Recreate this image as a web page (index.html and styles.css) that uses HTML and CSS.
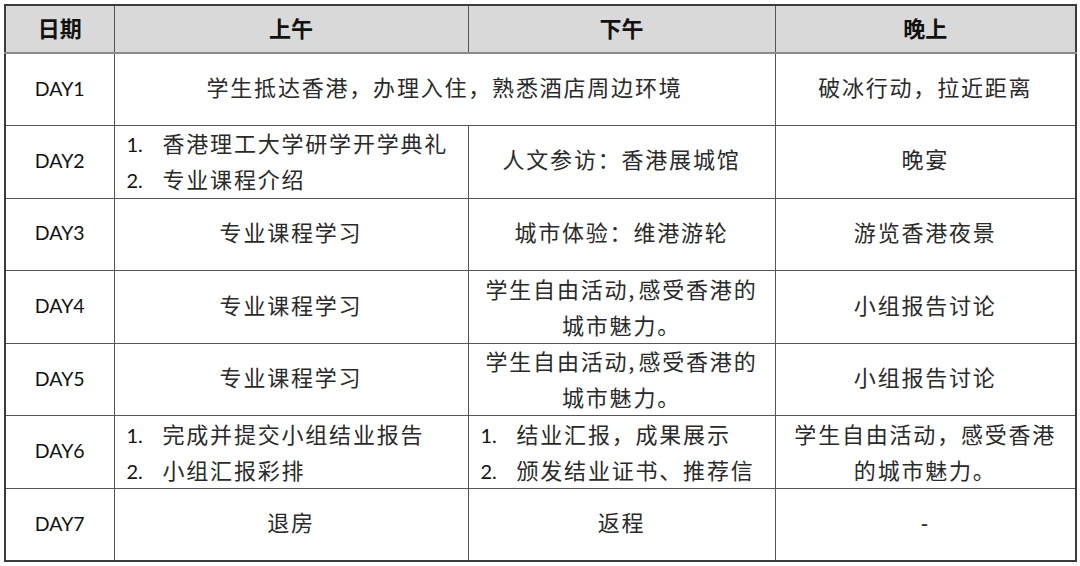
FILE: index.html
```html
<!DOCTYPE html>
<html lang="zh-CN">
<head>
<meta charset="utf-8">
<link rel="stylesheet" href="styles.css">
</head>
<body>
<table class="schedule">
  <colgroup>
    <col class="c-day">
    <col class="c-am">
    <col class="c-pm">
    <col class="c-eve">
  </colgroup>
  <thead>
    <tr class="head">
      <th>日期</th>
      <th>上午</th>
      <th>下午</th>
      <th>晚上</th>
    </tr>
  </thead>
  <tbody>
    <tr>
      <td class="day">DAY1</td>
      <td colspan="2"><div class="txt">学生抵达香港，办理入住，熟悉酒店周边环境</div></td>
      <td><div class="txt">破冰行动，拉近距离</div></td>
    </tr>
    <tr>
      <td class="day">DAY2</td>
      <td class="list">
        <div class="txt multi">
          <div class="li"><span class="num">1.</span><span>香港理工大学研学开学典礼</span></div>
          <div class="li"><span class="num">2.</span><span>专业课程介绍</span></div>
        </div>
      </td>
      <td><div class="txt">人文参访：香港展城馆</div></td>
      <td><div class="txt">晚宴</div></td>
    </tr>
    <tr>
      <td class="day">DAY3</td>
      <td><div class="txt">专业课程学习</div></td>
      <td><div class="txt">城市体验：维港游轮</div></td>
      <td><div class="txt">游览香港夜景</div></td>
    </tr>
    <tr>
      <td class="day">DAY4</td>
      <td><div class="txt">专业课程学习</div></td>
      <td><div class="txt multi">学生自由活动<span class="nc">,</span>感受香港的<br>城市魅力。</div></td>
      <td><div class="txt">小组报告讨论</div></td>
    </tr>
    <tr>
      <td class="day">DAY5</td>
      <td><div class="txt">专业课程学习</div></td>
      <td><div class="txt multi">学生自由活动<span class="nc">,</span>感受香港的<br>城市魅力。</div></td>
      <td><div class="txt">小组报告讨论</div></td>
    </tr>
    <tr>
      <td class="day">DAY6</td>
      <td class="list">
        <div class="txt multi">
          <div class="li"><span class="num">1.</span><span>完成并提交小组结业报告</span></div>
          <div class="li"><span class="num">2.</span><span>小组汇报彩排</span></div>
        </div>
      </td>
      <td class="list">
        <div class="txt multi">
          <div class="li"><span class="num">1.</span><span>结业汇报，成果展示</span></div>
          <div class="li"><span class="num">2.</span><span>颁发结业证书、推荐信</span></div>
        </div>
      </td>
      <td><div class="txt multi">学生自由活动，感受香港<br>的城市魅力。</div></td>
    </tr>
    <tr>
      <td class="day">DAY7</td>
      <td><div class="txt">退房</div></td>
      <td><div class="txt">返程</div></td>
      <td class="dash">-</td>
    </tr>
  </tbody>
</table>
</body>
</html>
```

FILE: styles.css
```css
html, body {
  margin: 0;
  padding: 0;
  background: #ffffff;
}
body {
  padding: 4px 0 0 4px;
}
.schedule {
  border-collapse: collapse;
  table-layout: fixed;
  width: 1071px;
  border: 2px solid #3c3c3c;
  font-family: "Noto Sans CJK SC", sans-serif;
  color: #2a2a2a;
}
.c-day { width: 109px; }
.c-am { width: 354px; }
.c-pm { width: 307px; }
.c-eve { width: 301px; }

.schedule th,
.schedule td {
  border: 1px solid #555555;
  padding: 0;
  text-align: center;
  vertical-align: middle;
}
.head {
  height: 48px;
}
.head th {
  background: #d9d9d9;
  font-family: "Noto Sans CJK SC", sans-serif;
  font-weight: 700;
  font-size: 22px;
  line-height: 28px;
  padding-bottom: 4px;
  color: #111111;
  border-bottom: 2px solid #8a8a8a;
}
.schedule tbody tr {
  height: 72.6px;
}
.schedule td {
  font-size: 22px;
  font-weight: 400;
  letter-spacing: 1.8px;
  line-height: 36px;
}
.txt {
  margin-top: -7px;
}
.txt.multi {
  margin-top: -3px;
}
.schedule td.day {
  font-family: Lato, "Liberation Sans", sans-serif;
  font-weight: 400;
  font-size: 19.5px;
  letter-spacing: 0;
  line-height: 24px;
  padding-bottom: 2px;
  color: #111111;
}
.schedule td.list {
  text-align: left;
  padding-left: 12px;
}
.li {
  display: flex;
  align-items: center;
  height: 36px;
}
.num {
  font-family: Lato, "Liberation Sans", sans-serif;
  font-weight: 400;
  font-size: 20px;
  line-height: 24px;
  letter-spacing: 0;
  color: #111111;
  width: 36px;
  flex: none;
  padding-top: 4px;
}
.nc {
  letter-spacing: 0;
  margin-right: 4px;
}
.schedule td.dash {
  font-family: "Liberation Sans", sans-serif;
  line-height: 24px;
  padding-bottom: 2px;
}
```
